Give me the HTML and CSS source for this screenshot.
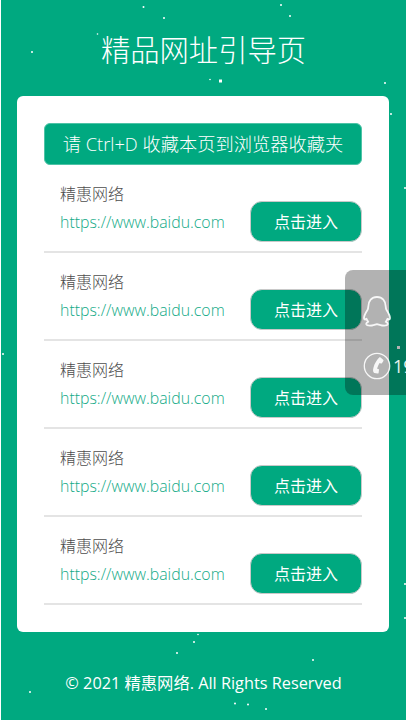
FILE: index.html
```html
<!DOCTYPE html>
<html lang="zh-CN">
<head>
<meta charset="utf-8">
<title>精品网址引导页</title>
<link rel="stylesheet" href="styles.css">
</head>
<body>
<main class="page">
  <svg class="stars" width="405" height="720" viewBox="0 0 405 720" aria-hidden="true">
    <g fill="#fff">
      <circle cx="142.5" cy="7" r="1"/><circle cx="163" cy="18" r="1"/><circle cx="280" cy="5" r="1"/>
      <circle cx="289" cy="16" r="1"/><circle cx="96.5" cy="34" r=".8"/><circle cx="31" cy="52" r="1"/>
      <circle cx="209" cy="79.5" r=".8"/><rect x="218" y="79.5" width="3" height="3"/><circle cx="384" cy="83" r="1"/>
      <circle cx="390" cy="114" r="1"/><circle cx="404" cy="188" r="1"/><circle cx="2" cy="354" r="1"/>
      <rect x="396" y="346" width="3" height="3"/><circle cx="404" cy="584" r="1"/><circle cx="404" cy="618" r="1"/>
      <circle cx="197" cy="634.5" r=".8"/><circle cx="193" cy="642" r="1"/><circle cx="176" cy="653" r="1"/>
      <circle cx="312" cy="660" r="1"/><circle cx="29" cy="692" r="1"/><circle cx="234" cy="703.5" r="1"/>
      <circle cx="247" cy="704.5" r="1"/><circle cx="265" cy="709" r="1"/>
    </g>
  </svg>
  <h1 class="title">精品网址引导页</h1>
  <section class="card">
    <p class="notice">请 Ctrl+D 收藏本页到浏览器收藏夹</p>
    <ul class="list">
      <li class="row"><div class="info"><span class="name">精惠网络</span><a class="url">https://www.baidu.com</a></div><a class="enter">点击进入</a></li>
      <li class="row"><div class="info"><span class="name">精惠网络</span><a class="url">https://www.baidu.com</a></div><a class="enter">点击进入</a></li>
      <li class="row"><div class="info"><span class="name">精惠网络</span><a class="url">https://www.baidu.com</a></div><a class="enter">点击进入</a></li>
      <li class="row"><div class="info"><span class="name">精惠网络</span><a class="url">https://www.baidu.com</a></div><a class="enter">点击进入</a></li>
      <li class="row"><div class="info"><span class="name">精惠网络</span><a class="url">https://www.baidu.com</a></div><a class="enter">点击进入</a></li>
    </ul>
  </section>
  <footer class="footer">© 2021 精惠网络. All Rights Reserved</footer>
  <aside class="side">
    <div class="side-item">
      <svg class="qq" width="30" height="33" viewBox="0 0 30 33" aria-hidden="true">
        <path d="M15 2C9.5 2 6.5 6 6.3 11.5c0 1.500-.3 2.500-1 3.700C3.500 18 2 20.500 2 23c0 1.500 1 2 2.500 .8 .3 1.200 1 2.200 1.800 3-1.500 .7-2.300 1.500-2 2.500 .4 1.200 3 1.500 5.700 1.200 2-.2 3.500-1 5-1.300h0c1.500 .3 3 1.100 5 1.300 2.700 .3 5.300 0 5.700-1.200 .3-1-.5-1.800-2-2.500 .8-.8 1.500-1.800 1.800-3C27 25 28 24.500 28 23c0-2.500-1.500-5-3.300-7.800-.7-1.200-1-2.200-1-3.700C23.500 6 20.500 2 15 2z" fill="none" stroke="#fff" stroke-width="1.800" stroke-linejoin="round"/>
      </svg>
    </div>
    <div class="side-item phone">
      <svg class="tel" width="28" height="28" viewBox="0 0 28 28" aria-hidden="true">
        <circle cx="14" cy="14" r="12.700" fill="none" stroke="#fff" stroke-width="1.300"/>
        <path d="M17.500 5.500l2.700 2.200c.4 .3 .4 .8 .2 1.200l-1.500 2.300c-.3 .4-.7 .5-1.100 .3l-1.200-.5c-1 1.600-2 3.700-2.500 5.800l1.300 .3c.4 .1 .7 .5 .6 1l-.4 2.800c-.1 .5-.5 .8-1 .7l-3.400-.7C9.800 20.200 9.800 18 10.500 15.500 11.500 11.500 13.800 8.200 16.200 5.600c.3-.4 .9-.4 1.300-.1z" fill="#fff"/>
      </svg>
      <span class="side-num">19</span>
    </div>
  </aside>
</main>
</body>
</html>
```
FILE: styles.css
```css
* { box-sizing: border-box; }
html, body { margin: 0; padding: 0; background: #fff; }
body {
  width: 406px;
  height: 720px;
  overflow: hidden;
  padding-left: 1px;
  font-family: "Open Sans", "Noto Sans CJK SC", sans-serif;
}
.page {
  position: relative;
  width: 405px;
  height: 720px;
  overflow: hidden;
  background: #00a980;
  padding: 0 16px;
}
.stars { position: absolute; left: 0; top: 0; }
.title {
  position: relative;
  margin: 0;
  height: 96px;
  padding-top: 27px;
  color: #fff;
  font-size: 29.300px;
  line-height: 46px;
  font-weight: 300;
  text-align: center;
}
.card {
  position: relative;
  width: 372px;
  height: 536px;
  background: #fff;
  border-radius: 6px;
  padding: 27px;
}
.notice {
  margin: 0;
  height: 42px;
  background: #00a980;
  border: 1px solid #4dc3a6;
  border-radius: 6px;
  color: #fff;
  font-size: 18.250px;
  line-height: 40px;
  font-weight: 300;
  text-align: center;
  white-space: nowrap;
}
.list { list-style: none; margin: 0; padding: 0; }
.row {
  display: flex;
  justify-content: space-between;
  align-items: flex-end;
  height: 88px;
  padding: 0 0 9px 16px;
  border-bottom: 2px solid #e4e4e4;
}
.info { display: flex; flex-direction: column; padding-bottom: 6px; }
.name { color: #4d4d4d; font-size: 16px; line-height: 27px; font-weight: 300; }
.url { color: #12aa87; font-size: 15.900px; line-height: 28px; font-weight: 300; }
.enter {
  width: 112px;
  height: 41px;
  background: #00a980;
  border: 1.500px solid #c9c9c9;
  border-radius: 12px;
  color: #fff;
  font-size: 16px;
  line-height: 40px;
  text-align: center;
}
.footer {
  position: relative;
  padding-top: 39px;
  color: #fff;
  font-size: 16.300px;
  line-height: 24px;
  font-weight: 400;
  text-align: center;
  white-space: nowrap;
}
.side {
  position: absolute;
  right: 0;
  top: 270px;
  width: 61px;
  height: 125px;
  overflow: hidden;
  background: rgba(0, 0, 0, .3);
  border-radius: 8px 0 0 8px;
  padding: 25px 0 0 17px;
  color: #fff;
}
.side-item { display: flex; align-items: center; gap: 2px; white-space: nowrap; opacity: .9; }
.phone { margin-top: 24px; margin-left: 1px; }
.qq, .tel { flex: none; }
.side-num { font-size: 18px; line-height: 28px; }
```
